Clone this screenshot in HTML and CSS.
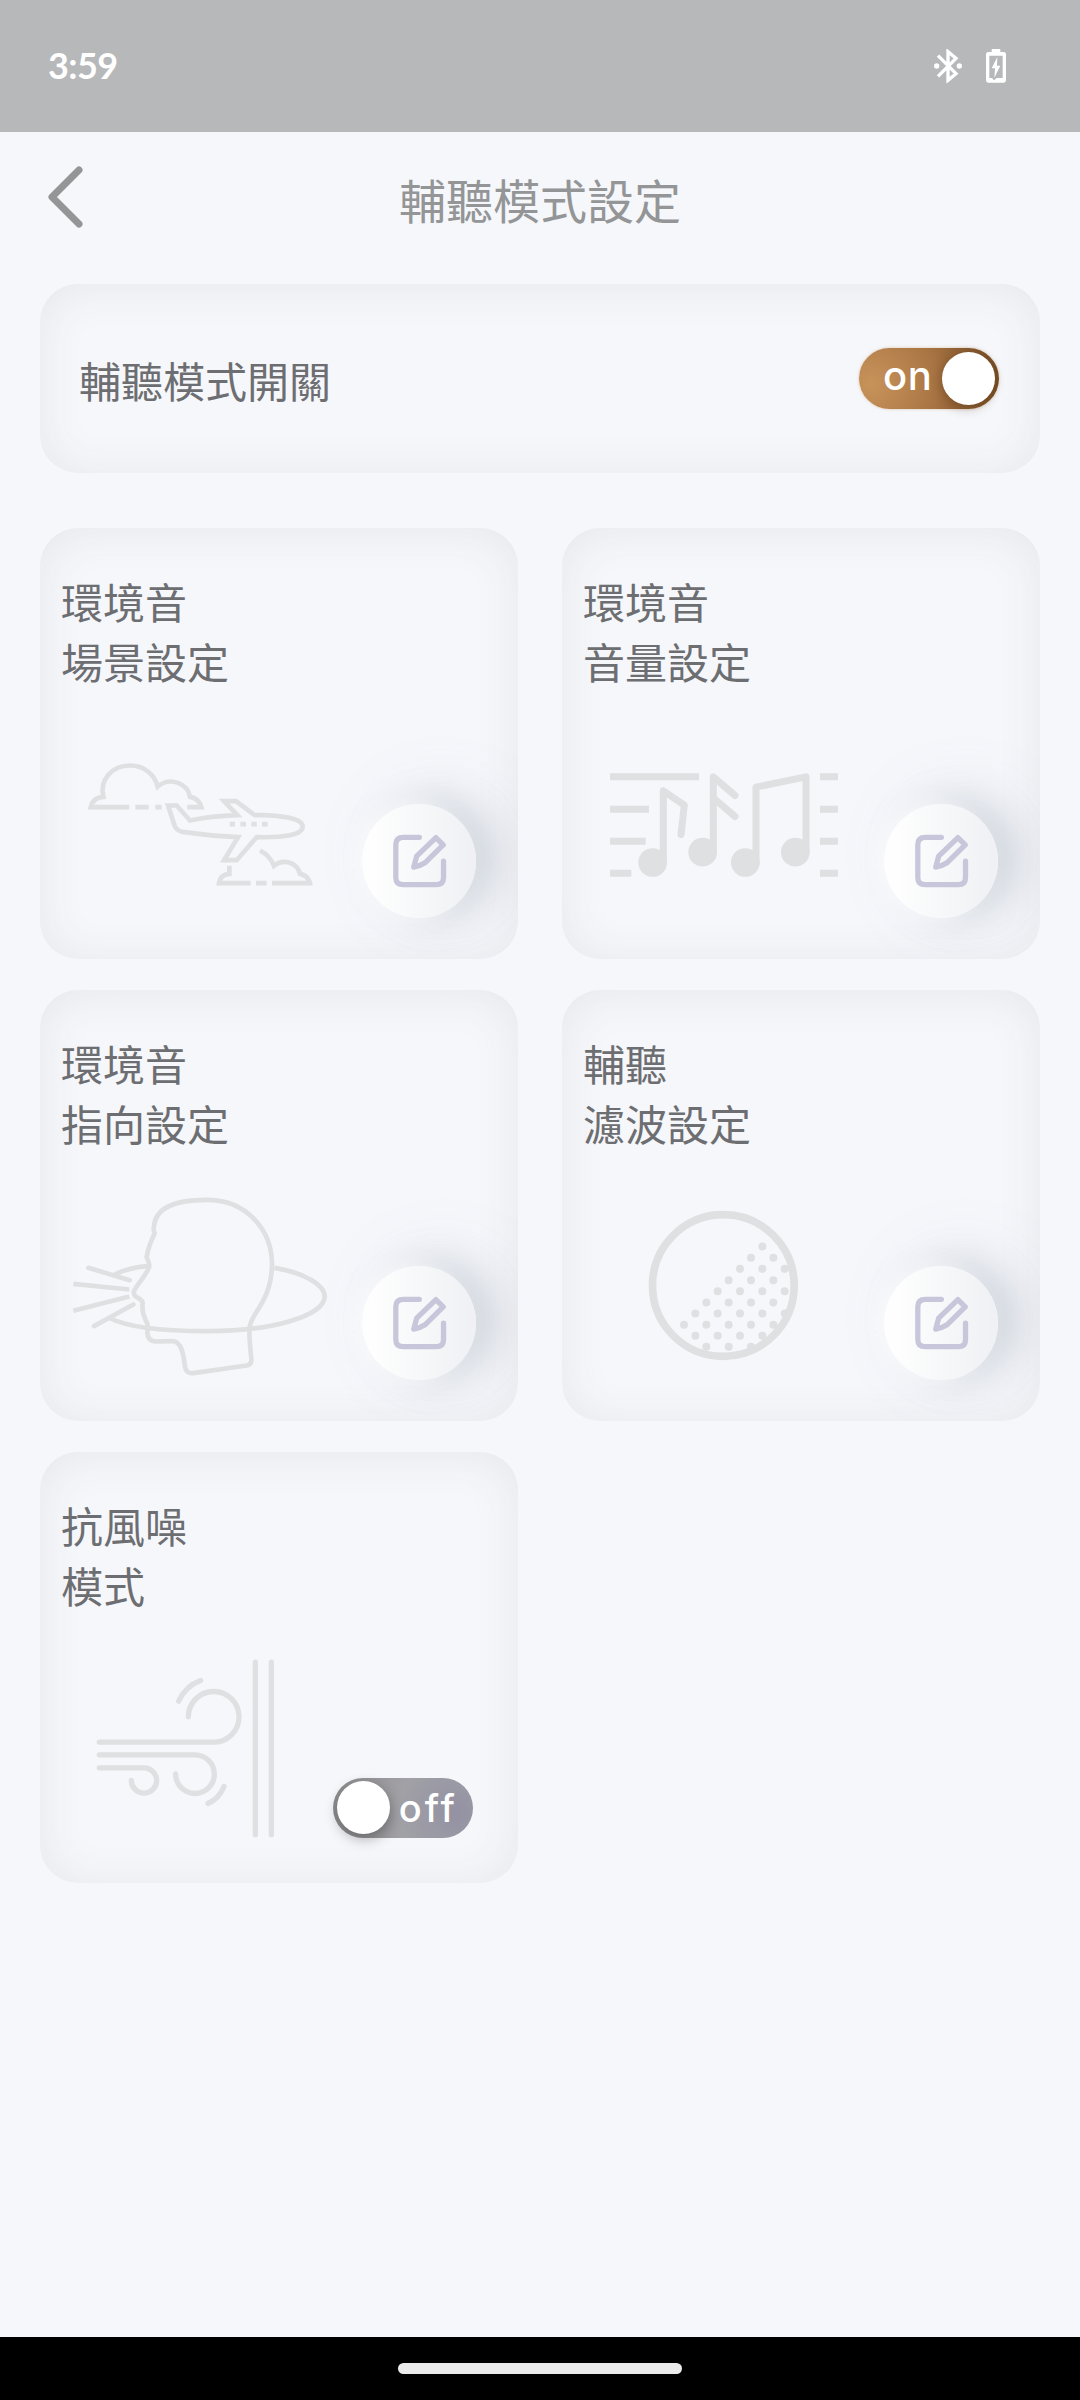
FILE: index.html
```html
<!DOCTYPE html>
<html lang="zh-Hant">
<head>
<meta charset="utf-8">
<title>輔聽模式設定</title>
<link rel="stylesheet" href="styles.css">
</head>
<body>
<svg class="defs" width="0" height="0" aria-hidden="true">
  <symbol id="edit" viewBox="156 160 165 163">
    <path d="M238 170H190Q167 170 167 192V291Q167 313 190 313H289Q311 313 311 291V242"/>
    <path d="M221 260L230 227L288 171L310 193L255 247Q240 257 221 260Z"/>
  </symbol>
</svg>
<div class="screen">
  <div class="status">
    <span class="clock">3:59</span>
    <div class="status-icons">
      <svg class="bt" viewBox="0 0 84 102"><path d="M12 20L66 74L42 94V8L66 28L12 82" fill="none" stroke="#fff" stroke-width="10"/><circle cx="8" cy="51" r="8" fill="#fff"/><circle cx="76" cy="51" r="8" fill="#fff"/></svg>
      <svg class="bat" viewBox="0 0 60 102"><path d="M17 0H43V9H53Q60 9 60 16V94Q60 101 53 101H7Q0 101 0 94V16Q0 9 7 9H17ZM10 20V87H18L24 94L32 87H50V20Z" fill="#fff" fill-rule="evenodd"/><path d="M34 24L17 58H27L25 86L43 50H33Z" fill="#fff"/></svg>
    </div>
  </div>
  <header class="header">
    <svg class="back" viewBox="0 0 36 62"><path d="M31 4L4 31L31 58"/></svg>
    <h1>輔聽模式設定</h1>
  </header>
  <main>
    <section class="panel master">
      <span class="label">輔聽模式開關</span>
      <div class="toggle on"><span>on</span><i class="knob"></i></div>
    </section>
    <div class="grid">
      <section class="panel card">
        <h2>環境音<br>場景設定</h2>
        <div class="foot">
          <svg class="art" viewBox="120 661.5 810 561">
            <g stroke-width="14">
              <path d="M328 890H212Q218 861 250 859C238 808 276 765 330 765C372 765 404 792 413 828C452 796 504 821 510 859Q537 863 544 890H502M346 890H386M406 890H425"/>
              <path d="M444 885H470L510 930Q570 917 652 914L612 872H648L704 914C780 912 848 924 848 948C848 974 790 982 710 980L650 1049H612L654 980Q570 976 486 964Q470 960 464 946Z"/>
              <path d="M629 941H645M661 941H678M694 941H710M726 941H743"/>
              <path d="M720 1020Q750 1035 762 1066C792 1042 832 1058 840 1090Q864 1094 870 1118H756M740 1118H708M692 1118H597Q601 1092 628 1090V1066"/>
            </g>
          </svg>
          <button class="edit"><svg><use href="#edit"/></svg></button>
        </div>
      </section>
      <section class="panel card">
        <h2>環境音<br>音量設定</h2>
        <div class="foot">
          <svg class="art" viewBox="96 661.5 810 561">
            <path stroke-width="21" d="M180 799H447M180 896H297M180 992H287M180 1088H244M810 799H864M810 896H864M810 992H864M810 1088H864"/>
            <g stroke-width="21" stroke-linecap="round" stroke-linejoin="round">
              <path d="M340 1056V841L403 884L393 972M490 1024V799L555 855M490 862L555 918M618 1056V830L768 799V1024"/>
            </g>
            <g class="solid"><circle cx="308" cy="1056" r="43"/><circle cx="458" cy="1025" r="43"/><circle cx="586" cy="1056" r="43"/><circle cx="736" cy="1025" r="43"/></g>
          </svg>
          <button class="edit"><svg><use href="#edit"/></svg></button>
        </div>
      </section>
      <section class="panel card">
        <h2>環境音<br>指向設定</h2>
        <div class="foot">
          <svg class="art" viewBox="120 667.5 810 561">
            <g stroke-width="14" stroke-linejoin="round">
              <path d="M404 788Q399 776 402 768C406 712 460 688 560 688C690 688 756 790 756 880C756 990 692 1030 689 1070Q686 1090 694 1165Q696 1182 680 1185L520 1208Q499 1210 495 1190C492 1160 486 1112 458 1112L405 1113Q383 1110 382 1088Q384 1070 382 1060C368 1030 366 1020 368 996C364 980 342 985 341 966C341 952 378 918 388 888Q388 876 380 860Q384 830 404 788Z"/>
              <path d="M388 886Q330 890 284 912M763 892C850 906 914 942 914 978C914 1035 760 1082 560 1082C430 1082 320 1070 266 1041"/>
              <path stroke-linecap="round" d="M205 892L329 929M340 1002L222 1067"/><path d="M160 940L328 957M160 1021L328 978"/>
            </g>
          </svg>
          <button class="edit"><svg><use href="#edit"/></svg></button>
        </div>
      </section>
      <section class="panel card">
        <h2>輔聽<br>濾波設定</h2>
        <div class="foot">
          <svg class="art" viewBox="96 667.5 810 561">
            <circle cx="520" cy="945" r="212.500" stroke-width="23"/>
            <path stroke-width="24" stroke-linecap="round" d="M637 828h0M603 862h0M670 862h0M570 895h0M637 895h0M704 895h0M536 929h0M603 929h0M670 929h0M503 962h0M570 962h0M637 962h0M704 962h0M469 996h0M536 996h0M603 996h0M670 996h0M436 1029h0M503 1029h0M570 1029h0M637 1029h0M704 1029h0M402 1063h0M469 1063h0M536 1063h0M603 1063h0M670 1063h0M436 1096h0M503 1096h0M570 1096h0M637 1096h0M469 1129h0M536 1129h0M603 1129h0"/>
          </svg>
          <button class="edit"><svg><use href="#edit"/></svg></button>
        </div>
      </section>
      <section class="panel card">
        <h2>抗風噪<br>模式</h2>
        <div class="foot">
          <svg class="art" viewBox="120 673.5 810 561">
            <g stroke-width="16" stroke-linecap="round">
              <path d="M706 695V1213M754 695V1213M238 935H583A76 76 0 1 0 505 859M476 812Q497 766 542 750"/>
              <path d="M238 973H523A58 58 0 1 1 467 1030M238 1012H372A38 38 0 1 1 334 1050M612 1068Q597 1105 564 1119"/>
            </g>
          </svg>
          <div class="toggle off"><i class="knob"></i><span>off</span></div>
        </div>
      </section>
    </div>
  </main>
  <div class="navbar"><i></i></div>
</div>
</body>
</html>
```
FILE: styles.css
```css
* { box-sizing: border-box; margin: 0; padding: 0; }
body {
  background: #f6f7fb;
  font-family: "Noto Sans CJK TC", sans-serif;
  color: #6d6e71;
}
.defs { display: block; }
.screen { width: 1080px; height: 2400px; display: flex; flex-direction: column; }

.status {
  height: 132px;
  background: #b7b8ba;
  display: flex;
  align-items: center;
  justify-content: space-between;
  padding: 0 74px 0 48px;
}
.clock { color: #fff; font: 700 36px/1 Lato, sans-serif; letter-spacing: -.6px; padding-bottom: 2px; }
.status-icons { display: flex; align-items: center; gap: 24px; }
.bt { width: 28px; height: 34px; }
.bat { width: 20px; height: 34px; }

.header {
  height: 152px;
  display: grid;
  grid-template-columns: 50px 1fr 50px;
  padding: 0 48px;
}
.back { width: 36px; height: 62px; margin-top: 34px; }
.back path { fill: none; stroke: #949596; stroke-width: 7; stroke-linecap: round; stroke-linejoin: round; }
h1 { font-size: 47px; font-weight: 400; line-height: 70px; color: #949596; text-align: center; margin-top: 32px; }

main { flex: 1; padding: 0 40px; }
.panel {
  border-radius: 38px;
  overflow: hidden;
  box-shadow: inset 0 3px 46px rgba(70, 70, 70, .085);
}
.master {
  height: 188.500px;
  display: flex;
  align-items: center;
  justify-content: space-between;
  padding: 0 41px 0 39px;
  font-size: 42px;
}
.label { padding-top: 2px; }
.grid {
  display: grid;
  grid-template-columns: 478px 478px;
  grid-auto-rows: 430.500px;
  gap: 31.500px 44px;
  margin-top: 55.500px;
}
.card {
  display: flex;
  flex-direction: column;
  justify-content: space-between;
  padding: 43px 42px 41px 20px;
}
h2 { font-size: 42px; font-weight: 400; line-height: 60px; padding-left: 1px; }
.foot { display: flex; justify-content: space-between; align-items: flex-end; }
.art { width: 270px; height: 187px; fill: none; stroke: #dfe0e2; flex: none; }
.solid { fill: #dfe0e2; stroke: none; }

.edit {
  width: 114px;
  height: 114px;
  border: 0;
  border-radius: 50%;
  background: linear-gradient(90deg, #fefefe 10%, #eff1f4 95%);
  box-shadow: -9px 0 22px rgba(252, 252, 254, .9), 16px -2px 36px rgba(140, 158, 172, .3), 24px -6px 70px rgba(140, 145, 155, .17);
  display: flex;
  align-items: center;
  justify-content: center;
}
.edit svg { width: 55px; height: 54px; fill: none; stroke: #c8c6da; stroke-width: 16; stroke-linecap: round; stroke-linejoin: round; }

.toggle {
  width: 140px;
  height: 60.500px;
  border-radius: 31px;
  display: flex;
  align-items: center;
  justify-content: space-between;
  color: #fff;
  font: 500 40px/1 Inter, sans-serif;
}
.knob { width: 53px; height: 53px; border-radius: 50%; background: #fff; }
.on { background: radial-gradient(circle at 12px 36px, #c8935a, #a87443 50%, #6b4520 105%); padding: 0 4px 0 24px; }
.on .knob { box-shadow: -2px 3px 12px rgba(60, 30, 0, .3); }
.on span { margin-top: -5px; letter-spacing: .5px; }
.on { box-shadow: 0 0 3px rgba(200, 147, 90, .5); }
.off { background: radial-gradient(circle at 122px 34px, #9391a3, #a1a1a6 45%, #8c8c8e 100%); padding: 0 15px 0 4px; margin: 0 3px 3.500px 0; }
.off span { font-size: 38px; letter-spacing: 3px; }
.off .knob { box-shadow: 1px 5px 14px rgba(0, 0, 0, .3); }

.navbar { height: 63px; background: #000; display: flex; align-items: center; justify-content: center; }
.navbar i { width: 284px; height: 11px; border-radius: 5.500px; background: #ebebeb; }
```
